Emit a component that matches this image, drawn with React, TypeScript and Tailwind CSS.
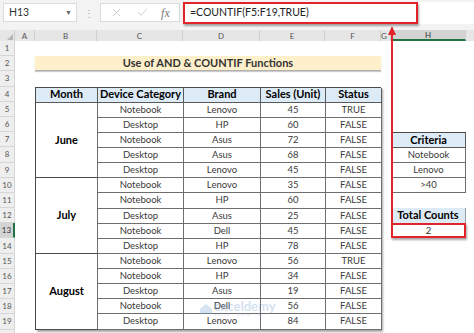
import { Check, X } from "lucide-react";

type Row = [string, string, number, string];

const GROUPS: { month: string; rows: Row[] }[] = [
  {
    month: "June",
    rows: [
      ["Notebook", "Lenovo", 45, "TRUE"],
      ["Desktop", "HP", 60, "FALSE"],
      ["Notebook", "Asus", 72, "FALSE"],
      ["Desktop", "Asus", 68, "FALSE"],
      ["Desktop", "Lenovo", 45, "FALSE"],
    ],
  },
  {
    month: "July",
    rows: [
      ["Notebook", "Lenovo", 35, "FALSE"],
      ["Notebook", "HP", 60, "FALSE"],
      ["Desktop", "Asus", 25, "FALSE"],
      ["Notebook", "Dell", 45, "FALSE"],
      ["Desktop", "HP", 78, "FALSE"],
    ],
  },
  {
    month: "August",
    rows: [
      ["Notebook", "Lenovo", 56, "TRUE"],
      ["Notebook", "HP", 34, "FALSE"],
      ["Desktop", "Asus", 19, "FALSE"],
      ["Notebook", "Dell", 56, "FALSE"],
      ["Desktop", "Lenovo", 84, "FALSE"],
    ],
  },
];

const COLS = ["A", "B", "C", "D", "E", "F", "G", "H"];
const COL_W = ["w-[20px]", "w-[62px]", "w-[86px]", "w-[77px]", "w-[65px]", "w-[56px]", "w-[10px]", "w-[75px]"];
const ROWS = Array.from({ length: 20 }, (_, i) => i + 1);

const cell = "flex items-center justify-center border-r border-b border-[#6e6e6e] text-[9.5px] text-[#3a3a3a]";
const head = "flex items-center justify-center border-r border-b border-[#5a5a5a] bg-[#ddebf7] text-[11px] font-bold text-black";

export default function App() {
  return (
    <div className="relative h-[333px] w-[474px] overflow-hidden bg-white font-['Lato','Liberation_Sans',sans-serif]">
      {/* formula bar */}
      <div className="flex h-[30px] items-start bg-[#f3f3f3] pt-[3px]">
        <div className="ml-[3px] flex h-[19px] w-[74px] items-center justify-between border border-[#dadada] bg-white pl-[5px] pr-[4px] text-[10.5px] text-[#333]">
          <span>H13</span>
          <span className="text-[7px] text-[#666]">▼</span>
        </div>
        <div className="flex h-[19px] w-[23px] items-center justify-center text-[10px] leading-none text-[#aaa]">⋮</div>
        <div className="flex h-[19px] w-[80px] items-center justify-around border border-[#dadada] bg-white px-[3px] text-[#b4b4b4]">
          <X size={13} strokeWidth={1.2} />
          <Check size={13} strokeWidth={1.2} />
          <span className="font-['Liberation_Serif',serif] text-[12px] italic text-[#777]">fx</span>
        </div>
        <div className="-mt-[1px] ml-[3px] flex h-[22px] flex-1 bg-white">
          <div className="flex h-[22px] w-[235px] items-center border-2 border-[#e3232a] pl-[5px] text-[10.5px] text-[#222] shadow-[1px_2px_2px_rgba(0,0,0,0.35)]">
            =COUNTIF(F5:F19,TRUE)
          </div>
        </div>
      </div>

      {/* column headers */}
      <div className="flex h-[11px] bg-[#e6e6e6] text-[8px] leading-none text-[#555]">
        <div className="relative w-[15px] border-r border-[#cfcfcf]">
          <div className="absolute bottom-[1px] right-[1px] h-0 w-0 border-b-[6px] border-l-[6px] border-b-[#b5b5b5] border-l-transparent" />
        </div>
        {COLS.map((c, i) => (
          <div
            key={c}
            className={`${COL_W[i]} flex items-center ${c === "G" ? "justify-start" : "justify-center"} border-r border-[#cfcfcf] ${
              c === "H" ? "border-b-2 border-b-[#217346] bg-[#d3d3d3] text-[#333]" : ""
            }`}
          >
            {c}
          </div>
        ))}
        <div className="flex-1" />
      </div>

      {/* sheet body */}
      <div className="flex">
        <div className="w-[15px] shrink-0 bg-[#eeeeee] text-[8px] text-[#555]">
          {ROWS.map((r) => (
            <div
              key={r}
              className={`flex h-[15.2px] items-center justify-center border-b border-r border-[#d6d6d6] ${
                r === 13 ? "border-r-2 border-r-[#217346] bg-[#d3d3d3] text-[#333]" : ""
              }`}
            >
              {r < 20 ? r : ""}
            </div>
          ))}
        </div>

        <div className="grid grid-cols-[20px_62px_86px_77px_65px_56px_10px_75px_1fr] grid-rows-[repeat(20,15.2px)]">
          {/* title */}
          <div className="col-[2/7] row-[2/3] flex items-center justify-center border-b border-[#b0b0b0] bg-[#fdf0cb] text-[11px] font-bold text-[#333] shadow-[0_1px_1px_rgba(0,0,0,0.2)]">
            Use of AND &amp; COUNTIF Functions
          </div>

          {/* main table */}
          <div className="col-[2/7] row-[4/20] grid grid-cols-[62px_86px_77px_65px_56px] grid-rows-[repeat(16,minmax(0,1fr))] border-l border-t border-[#4a4a4a] shadow-[2px_2px_2px_rgba(0,0,0,0.35)]">
            <div className={head}>Month</div>
            <div className={head}>Device Category</div>
            <div className={head}>Brand</div>
            <div className={head}>Sales (Unit)</div>
            <div className={head}>Status</div>
            {GROUPS.map((g) =>
              g.rows.map((r, i) => [
                i === 0 && (
                  <div key={g.month} className={`${cell} row-span-5 border-b-[#4a4a4a] text-[11px] font-bold text-black`}>
                    {g.month}
                  </div>
                ),
                <div key={`${g.month}${i}c`} className={cell}>{r[0]}</div>,
                <div key={`${g.month}${i}b`} className={cell}>{r[1]}</div>,
                <div key={`${g.month}${i}s`} className={cell}>{r[2]}</div>,
                <div key={`${g.month}${i}t`} className={cell}>{r[3]}</div>,
              ]),
            )}
          </div>

          {/* criteria */}
          <div className="col-[8/9] row-[7/11] grid grid-rows-[repeat(4,minmax(0,1fr))] border-l border-t border-[#4a4a4a]">
            <div className={head}>Criteria</div>
            <div className={cell}>Notebook</div>
            <div className={cell}>Lenovo</div>
            <div className={cell}>&gt;40</div>
          </div>

          {/* total */}
          <div className="col-[8/9] row-[12/13] flex items-center justify-center border-r border-[#9a9a9a] bg-[#ddebf7] text-[11px] font-bold text-black">
            Total Counts
          </div>
          <div className="col-[8/9] row-[13/14] flex items-center justify-center border-2 border-[#e3232a] text-[9.5px] text-[#333] shadow-[1px_2px_2px_rgba(0,0,0,0.35)]">
            2
          </div>
        </div>
      </div>

      {/* arrow from the formula to the result cell */}
      <svg className="absolute left-[387px] top-[26px]" width="10" height="198" viewBox="0 0 10 198">
        <line x1="5" y1="6" x2="5" y2="198" stroke="#e3232a" strokeWidth="2" />
        <path d="M5 0 L9 9 L1 9 Z" fill="#e3232a" />
      </svg>

      {/* watermark */}
      <div className="absolute left-[200px] top-[300px] flex items-center gap-[2px] opacity-30">
        <svg width="12" height="10" viewBox="0 0 12 10">
          <path d="M0 5 L6 0 L12 5 L12 10 L0 10 Z" fill="#7aa4d6" />
        </svg>
        <div className="flex flex-col leading-none">
          <span className="text-[13px] font-bold text-[#6f9bd1]">exceldemy</span>
          <span className="text-[4px] tracking-[1px] text-[#6f9bd1]">EXCEL · DATA · BI</span>
        </div>
      </div>
    </div>
  );
}
